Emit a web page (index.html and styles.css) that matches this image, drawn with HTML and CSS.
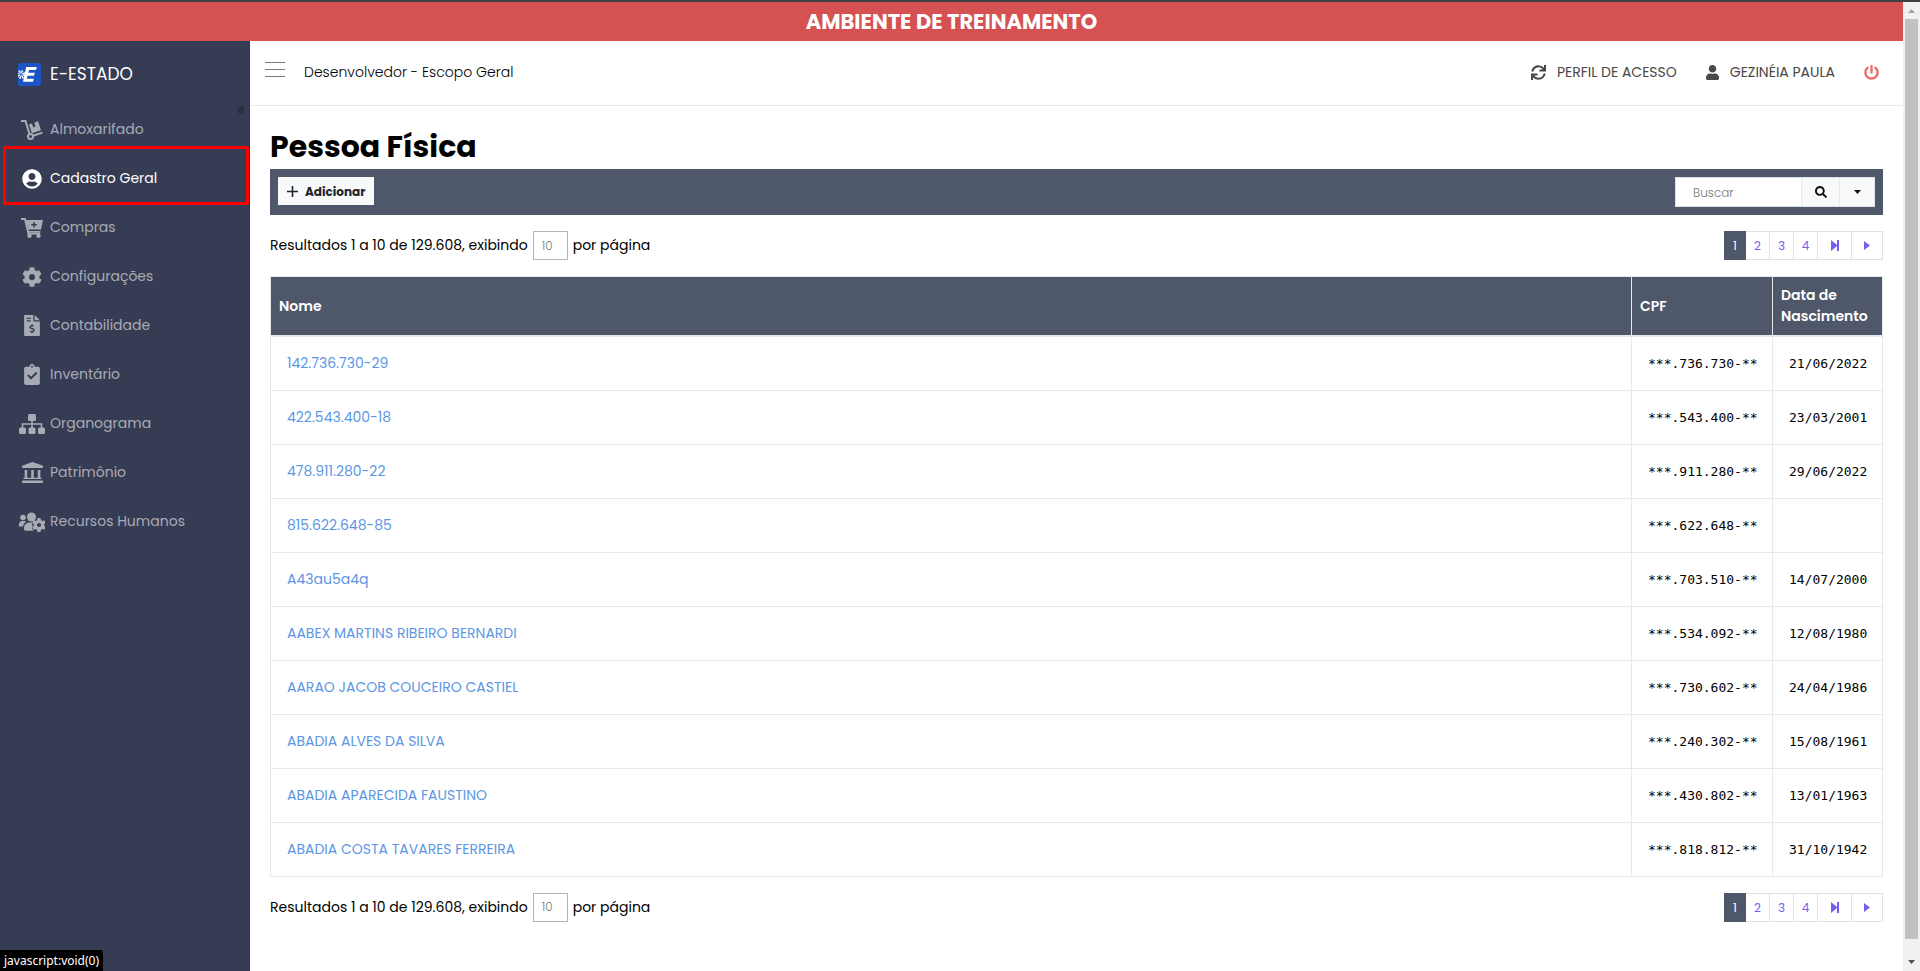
FILE: index.html
```html
<!DOCTYPE html>
<html lang="pt-BR">
<head>
<meta charset="utf-8">
<title>Pessoa Física - E-Estado</title>
<link rel="stylesheet" href="styles.css">
</head>
<body>
<svg class="sprite" aria-hidden="true">
  <symbol id="i-user-circle" viewBox="0 0 496 512"><path d="M248 8C111 8 0 119 0 256s111 248 248 248 248-111 248-248S385 8 248 8zm0 96c48.600 0 88 39.400 88 88s-39.400 88-88 88-88-39.400-88-88 39.400-88 88-88zm0 344c-58.700 0-111.300-26.600-146.500-68.200 18.800-35.400 55.600-59.800 98.500-59.800 2.400 0 4.800.4 7.100 1.100 13 4.200 26.600 6.900 40.900 6.900 14.300 0 28-2.700 40.900-6.900 2.300-.7 4.700-1.100 7.100-1.100 42.900 0 79.700 24.400 98.500 59.800C359.300 421.400 306.700 448 248 448z"/></symbol>
  <symbol id="i-cog" viewBox="0 0 512 512"><path d="M487.4 315.7l-42.6-24.6c4.3-23.2 4.3-47 0-70.2l42.6-24.6c4.9-2.800 7.100-8.600 5.500-14-11.100-35.600-30-67.800-54.700-94.600-3.800-4.100-10-5.100-14.800-2.300L380.800 110c-17.900-15.400-38.500-27.300-60.800-35.100V25.800c0-5.600-3.900-10.500-9.400-11.700-36.700-8.200-74.300-7.800-109.200 0-5.500 1.200-9.400 6.100-9.400 11.700V75c-22.200 7.900-42.800 19.800-60.800 35.100L88.700 85.500c-4.900-2.800-11-1.900-14.800 2.300-24.700 26.700-43.600 58.900-54.700 94.600-1.700 5.400.6 11.200 5.500 14L67.300 221c-4.300 23.200-4.300 47 0 70.200l-42.600 24.600c-4.900 2.800-7.100 8.600-5.500 14 11.100 35.600 30 67.800 54.700 94.600 3.800 4.100 10 5.100 14.800 2.300l42.600-24.600c17.900 15.400 38.500 27.300 60.800 35.100v49.200c0 5.600 3.900 10.500 9.400 11.700 36.700 8.200 74.300 7.800 109.200 0 5.500-1.200 9.400-6.100 9.400-11.700v-49.200c22.200-7.900 42.800-19.800 60.800-35.100l42.600 24.600c4.900 2.800 11 1.900 14.800-2.300 24.700-26.700 43.600-58.900 54.700-94.600 1.500-5.500-.7-11.300-5.600-14.100zM256 336c-44.100 0-80-35.900-80-80s35.900-80 80-80 80 35.900 80 80-35.900 80-80 80z"/></symbol>
  <symbol id="i-power" viewBox="0 0 512 512"><path d="M400 54.100c63 45 104 118.600 104 201.900 0 136.800-110.800 247.700-247.500 248C120 504.300 8.200 393 8 256.400 7.900 173.100 48.900 99.300 111.800 54.200c11.700-8.300 28-4.800 35 7.700L162.600 90c5.900 10.500 3.100 23.800-6.600 31-41.500 30.800-68 79.600-68 134.900-.1 92.300 74.500 168.100 168 168.100 91.600 0 168.600-74.200 168-169.100-.3-51.800-24.700-101.800-68.100-134-9.700-7.200-12.400-20.500-6.500-30.900l15.800-28.100c7-12.400 23.200-16.100 34.800-7.800zM296 264V24c0-13.300-10.700-24-24-24h-32c-13.300 0-24 10.700-24 24v240c0 13.300 10.700 24 24 24h32c13.300 0 24-10.700 24-24z"/></symbol>
  <symbol id="i-user" viewBox="0 0 448 512"><path d="M224 256c70.700 0 128-57.300 128-128S294.700 0 224 0 96 57.300 96 128s57.300 128 128 128zm89.600 32h-16.700c-22.200 10.200-46.900 16-72.900 16s-50.600-5.800-72.900-16h-16.700C60.200 288 0 348.200 0 422.400V464c0 26.500 21.500 48 48 48h352c26.500 0 48-21.500 48-48v-41.600c0-74.200-60.200-134.400-134.400-134.400z"/></symbol>
  <symbol id="i-sync" viewBox="0 0 512 512"><path d="M440.650 12.570l4 82.770A247.160 247.160 0 0 0 255.830 8C134.730 8 33.910 94.920 12.290 209.820A12 12 0 0 0 24.090 224h49.050a12 12 0 0 0 11.670-9.260 175.910 175.910 0 0 1 317-56.940l-101.460-4.860a12 12 0 0 0-12.570 12v47.410a12 12 0 0 0 12 12H500a12 12 0 0 0 12-12V12a12 12 0 0 0-12-12h-47.370a12 12 0 0 0-11.980 12.570zM255.830 432a175.610 175.610 0 0 1-146-77.800l101.800 4.870a12 12 0 0 0 12.570-12v-47.400a12 12 0 0 0-12-12H12a12 12 0 0 0-12 12V500a12 12 0 0 0 12 12h47.350a12 12 0 0 0 12-12.600l-4.150-82.570A247.170 247.170 0 0 0 255.830 504c121.110 0 221.930-86.920 243.550-201.820a12 12 0 0 0-11.800-14.180h-49.050a12 12 0 0 0-11.670 9.260A175.860 175.860 0 0 1 255.830 432z"/></symbol>
  <symbol id="i-search" viewBox="0 0 512 512"><path d="M505 442.700L405.300 343c-4.500-4.500-10.600-7-17-7H372c27.600-35.300 44-79.700 44-128C416 93.100 322.900 0 208 0S0 93.100 0 208s93.100 208 208 208c48.300 0 92.700-16.400 128-44v16.300c0 6.400 2.500 12.500 7 17l99.700 99.700c9.400 9.400 24.600 9.400 33.900 0l28.300-28.300c9.400-9.400 9.400-24.600.1-34zM208 336c-70.700 0-128-57.200-128-128 0-70.700 57.200-128 128-128 70.700 0 128 57.200 128 128 0 70.700-57.200 128-128 128z"/></symbol>
  <symbol id="i-dolly" viewBox="0 0 22 20"><path d="M0 1h4.500l4 13" fill="none" stroke="currentColor" stroke-width="2"/><circle cx="9.500" cy="16.500" r="2.500" fill="none" stroke="currentColor" stroke-width="2"/><path d="M12 15.800l9.500-3.200" stroke="currentColor" stroke-width="2"/><path d="M8 4.500l3-1 1.200 3.800 2.300-.8-1.200-3.700L17 1l3 9.300-9.200 3z"/></symbol>
  <symbol id="i-cart" viewBox="0 0 22 20"><path d="M0 1h4l3.500 14.500H19" fill="none" stroke="currentColor" stroke-width="2"/><path fill-rule="evenodd" d="M5 2h17l-2 9.500H7.500zm7.300 2v2h-2v1.500h2v2h1.500v-2h2V6h-2V4z"/><path d="M6.500 13h13v1.500h-13z"/><circle cx="8.500" cy="17.700" r="2.200"/><circle cx="17.500" cy="17.700" r="2.200"/></symbol>
  <symbol id="i-invoice" viewBox="0 0 384 512"><path fill-rule="evenodd" d="M24 0h200v136c0 13 11 24 24 24h136v328c0 13-11 24-24 24H24c-13 0-24-11-24-24V24C0 11 11 0 24 0zm40 64v32h96V64zm0 64v32h96v-32zm112 96v25c-30 3-48 22-48 47 0 30 20 42 52 51 34 10 42 13 42 25 0 11-10 17-28 17-15 0-29-6-41-14l-17 27c13 9 26 14 40 16v26h32v-26c31-4 49-23 49-49 0-29-18-41-52-51-35-9-42-13-42-24 0-9 9-16 25-16 13 0 24 4 35 11l17-27c-10-7-21-11-32-13v-25z"/><path d="M256 0l128 128H256z"/></symbol>
  <symbol id="i-clipboard" viewBox="0 0 384 512"><path fill-rule="evenodd" d="M48 64h80a64 64 0 0 1 128 0h80c26 0 48 22 48 48v352c0 26-22 48-48 48H48c-26 0-48-22-48-48V112c0-26 22-48 48-48zm144-24a24 24 0 1 0 0 48 24 24 0 0 0 0-48zM82 294l77 78c5 5 12 5 17 0l139-137c5-5 5-12 0-17l-19-19c-5-5-12-5-17 0L168 309l-48-49c-5-5-12-5-17 0l-21 17c-5 5-5 12 0 17z"/></symbol>
  <symbol id="i-sitemap" viewBox="0 0 26 20"><rect x="9" width="8" height="7" rx="1.500"/><rect y="13.500" width="7" height="6.500" rx="1.500"/><rect x="9.500" y="13.500" width="7" height="6.500" rx="1.500"/><rect x="19" y="13.500" width="7" height="6.500" rx="1.500"/><path d="M13 7v7M3.500 14V10h19v4" fill="none" stroke="currentColor" stroke-width="1.600"/></symbol>
  <symbol id="i-museum" viewBox="0 0 512 512"><path d="M256 0l240 88c10 4 16 10 16 20v20c0 9-7 16-16 16H16c-9 0-16-7-16-16v-20c0-10 6-16 16-20zM24 448h464c13 0 24 11 24 24v40H0v-40c0-13 11-24 24-24zM64 192h64v192h96V192h64v192h96V192h64v192h16c9 0 16 7 16 16v16H32v-16c0-9 7-16 16-16h16z"/></symbol>
  <symbol id="i-users-cog" viewBox="0 0 26 20"><circle cx="4" cy="5.500" r="2.800"/><circle cx="12.500" cy="5" r="4.500"/><path d="M0 14.500v-2.300C0 10.400 1.300 9 3 9h2.500c.7 0 1.300.2 1.800.6-1.800 1-3 2.700-3.200 4.900zM5 16.800c0-4.200 2.300-6.300 5.500-6.300h3.300l-1 2 1 1.500-1 2 1.700 2.800H7c-1.200 0-2-.8-2-2z"/><path fill-rule="evenodd" d="M18.500 6h3l.5 2.200 1.300.8 2-.7 1.400 2.500-1.500 1.400v1.600l1.500 1.400-1.400 2.500-2-.7-1.300.8-.5 2.200h-3l-.5-2.200-1.300-.8-2 .7-1.400-2.500 1.500-1.400v-1.600l-1.500-1.400L14.700 8.300l2 .7 1.300-.8zM20 10.900a2.100 2.100 0 1 0 0 4.200 2.100 2.100 0 0 0 0-4.200z"/></symbol>
</svg>

<div class="frame">
  <div class="page">
    <div class="banner">AMBIENTE DE TREINAMENTO</div>
    <div class="shell">
      <aside class="sidebar">
        <a class="brand" href="#">
          <svg class="brand-logo" viewBox="0 0 23 23"><rect width="23" height="23" rx="2" fill="#1c54c4"/><path d="M8.200 4h10.600L18 7h-7l-.7 2.800h6.500l-.8 3H9.500l-.7 3h7l-.8 3H5z" fill="#fff"/><circle cx="3" cy="11.500" r="2.600" fill="none" stroke="#fff" stroke-width="3.400" stroke-dasharray="1.200 .84"/></svg>
          <span>E-ESTADO</span>
        </a>
        <nav class="menu" aria-label="Módulos">
          <a class="item" href="#"><span class="item-icon"><svg width="22" height="20"><use href="#i-dolly"/></svg></span>Almoxarifado</a>
          <a class="item active" href="#"><span class="item-icon"><svg width="20" height="20"><use href="#i-user-circle"/></svg></span>Cadastro Geral</a>
          <a class="item" href="#"><span class="item-icon"><svg width="22" height="20"><use href="#i-cart"/></svg></span>Compras</a>
          <a class="item" href="#"><span class="item-icon"><svg width="20" height="20"><use href="#i-cog"/></svg></span>Configurações</a>
          <a class="item" href="#"><span class="item-icon"><svg width="16" height="21"><use href="#i-invoice"/></svg></span>Contabilidade</a>
          <a class="item" href="#"><span class="item-icon"><svg width="16" height="21"><use href="#i-clipboard"/></svg></span>Inventário</a>
          <a class="item" href="#"><span class="item-icon"><svg width="26" height="20"><use href="#i-sitemap"/></svg></span>Organograma</a>
          <a class="item" href="#"><span class="item-icon"><svg width="21" height="21"><use href="#i-museum"/></svg></span>Patrimônio</a>
          <a class="item" href="#"><span class="item-icon"><svg width="26" height="20"><use href="#i-users-cog"/></svg></span>Recursos Humanos</a>
        </nav>
        <span class="side-thumb"></span>
      </aside>
      <div class="main">
        <header class="topbar">
          <button class="burger" type="button" aria-label="Menu"><span></span><span></span><span></span></button>
          <span class="scope">Desenvolvedor - Escopo Geral</span>
          <a class="top-link" href="#"><svg width="15" height="15"><use href="#i-sync"/></svg>PERFIL DE ACESSO</a>
          <a class="top-link" href="#"><svg width="13" height="15"><use href="#i-user"/></svg>GEZINÉIA PAULA</a>
          <a class="top-link power" href="#" aria-label="Sair"><svg width="15" height="15"><use href="#i-power"/></svg></a>
        </header>
        <main class="content">
          <h1>Pessoa Física</h1>
          <div class="toolbar">
            <button class="add" type="button"><svg width="11" height="11" viewBox="0 0 11 11"><path d="M5.500 0v11M0 5.500h11" stroke="currentColor" stroke-width="1.600"/></svg>Adicionar</button>
            <form class="search">
              <input type="text" placeholder="Buscar" aria-label="Buscar">
              <button class="go" type="button" aria-label="Pesquisar"><svg width="12" height="12"><use href="#i-search"/></svg></button>
              <button class="more" type="button" aria-label="Mais opções"><svg width="7" height="4" viewBox="0 0 7 4"><path d="M0 0h7L3.500 4z"/></svg></button>
            </form>
          </div>
          <div class="results">
            <label class="per-page">Resultados 1 a 10 de 129.608, exibindo <input type="text" value="10"> por página</label>
            <nav class="pager" aria-label="Páginas"><a class="on" href="#">1</a><a href="#">2</a><a href="#">3</a><a href="#">4</a><a class="last" href="#" aria-label="Última"><svg width="8" height="11" viewBox="0 0 8 11"><path d="M0 0l6 5V0h2v11H6V6l-6 5z"/></svg></a><a class="next" href="#" aria-label="Próxima"><svg width="6" height="9" viewBox="0 0 6 9"><path d="M0 0l6 4.500L0 9z"/></svg></a></nav>
          </div>
          <table>
            <thead><tr><th>Nome</th><th class="cpf">CPF</th><th class="date">Data de Nascimento</th></tr></thead>
            <tbody>
              <tr><td><a href="#">142.736.730-29</a></td><td class="mono">***.736.730-**</td><td class="mono">21/06/2022</td></tr>
              <tr><td><a href="#">422.543.400-18</a></td><td class="mono">***.543.400-**</td><td class="mono">23/03/2001</td></tr>
              <tr><td><a href="#">478.911.280-22</a></td><td class="mono">***.911.280-**</td><td class="mono">29/06/2022</td></tr>
              <tr><td><a href="#">815.622.648-85</a></td><td class="mono">***.622.648-**</td><td class="mono"></td></tr>
              <tr><td><a href="#">A43au5a4q</a></td><td class="mono">***.703.510-**</td><td class="mono">14/07/2000</td></tr>
              <tr><td><a href="#">AABEX MARTINS RIBEIRO BERNARDI</a></td><td class="mono">***.534.092-**</td><td class="mono">12/08/1980</td></tr>
              <tr><td><a href="#">AARAO JACOB COUCEIRO CASTIEL</a></td><td class="mono">***.730.602-**</td><td class="mono">24/04/1986</td></tr>
              <tr><td><a href="#">ABADIA ALVES DA SILVA</a></td><td class="mono">***.240.302-**</td><td class="mono">15/08/1961</td></tr>
              <tr><td><a href="#">ABADIA APARECIDA FAUSTINO</a></td><td class="mono">***.430.802-**</td><td class="mono">13/01/1963</td></tr>
              <tr><td><a href="#">ABADIA COSTA TAVARES FERREIRA</a></td><td class="mono">***.818.812-**</td><td class="mono">31/10/1942</td></tr>
            </tbody>
          </table>
          <div class="results">
            <label class="per-page">Resultados 1 a 10 de 129.608, exibindo <input type="text" value="10"> por página</label>
            <nav class="pager" aria-label="Páginas, rodapé"><a class="on" href="#">1</a><a href="#">2</a><a href="#">3</a><a href="#">4</a><a class="last" href="#" aria-label="Última"><svg width="8" height="11" viewBox="0 0 8 11"><path d="M0 0l6 5V0h2v11H6V6l-6 5z"/></svg></a><a class="next" href="#" aria-label="Próxima"><svg width="6" height="9" viewBox="0 0 6 9"><path d="M0 0l6 4.500L0 9z"/></svg></a></nav>
          </div>
        </main>
      </div>
    </div>
  </div>
  <div class="scrollbar">
    <svg width="7" height="4" viewBox="0 0 7 4"><path d="M3.500 0L7 4H0z" fill="#a3a3a3"/></svg>
    <span class="thumb"></span>
    <svg width="7" height="4" viewBox="0 0 7 4"><path d="M0 0h7L3.500 4z" fill="#505050"/></svg>
  </div>
</div>
<div class="status">javascript:void(0)</div>
</body>
</html>
```
FILE: styles.css
```css
* { box-sizing: border-box; }
body {
  margin: 0;
  background: #fff;
  color: #000;
  font: 400 14px/21px Poppins, Inter, "Open Sans", sans-serif;
}
a { color: inherit; text-decoration: none; }
button, input { font: inherit; color: inherit; border-radius: 0; margin: 0; }
svg { fill: currentColor; flex: none; }
.sprite { position: absolute; width: 0; height: 0; }

.frame { display: flex; height: 100vh; overflow: hidden; border-top: 2px solid #414141; }
.page { flex: 1; display: flex; flex-direction: column; min-width: 0; }
.banner {
  background: #d65151;
  color: #fff;
  font-size: 21px;
  font-weight: 700;
  line-height: 39px;
  text-align: center;
}
.shell { flex: 1; display: flex; min-height: 0; }

.sidebar { position: relative; width: 250px; background: #363c54; border-right: 1px solid #2f354b; }
.brand { display: flex; align-items: center; gap: 9px; height: 64px; padding: 2px 0 0 18px; color: #fff; font-size: 17px; }
.brand-logo { width: 23px; height: 23px; }
.item { display: flex; align-items: center; height: 49px; padding-left: 18px; color: #a9abb4; }
.item-icon { display: flex; justify-content: center; width: 28px; margin-right: 4px; }
.item.active { position: relative; color: #fff; }
.item.active::after { content: ""; position: absolute; inset: -8px 0 -2px 3px; border: 3px solid #f00; border-radius: 2px; }
.side-thumb { position: absolute; top: 65px; right: 5px; width: 6px; height: 8px; border-radius: 2px; background: #2b3143; }

.main { flex: 1; display: flex; flex-direction: column; min-width: 0; }
.topbar { display: flex; align-items: center; height: 65px; padding: 0 24px 1px 15px; border-bottom: 1px solid #e9e9ec; }
.burger { display: flex; flex-direction: column; gap: 6px; width: 20px; padding: 0; margin-bottom: 6px; border: 0; background: none; }
.burger span { height: 1px; background: #777; }
.scope { margin: 0 auto 0 19px; font-weight: 300; }
.top-link { display: flex; align-items: center; gap: 11px; margin-left: 29px; color: #484848; }
.top-link.power { color: #ee6a6e; }

.content { padding: 18px 20px; }
h1 { margin: 0; font-size: 30px; font-weight: 700; line-height: 45px; }
.toolbar { display: flex; justify-content: space-between; align-items: flex-start; height: 46px; padding: 8px; background: #4f576a; }
.add { display: flex; align-items: center; gap: 7px; height: 28px; padding: 0 9px; border: 0; background: #f8f9fb; color: #212529; font-size: 12px; font-weight: 700; }
.search { display: flex; width: 200px; height: 30px; border: 1px solid #dee1e6; background: #f8f9fb; font-size: 12px; }
.search input { flex: 1; min-width: 0; padding: 0 17px; border: 0; background: #fff; font-weight: 300; }
.search input::placeholder { color: #777; opacity: 1; }
.search button { display: grid; place-items: center; padding: 0; border: 0; border-left: 1px solid #e5e8ec; background: none; color: #111; }
.go { width: 38px; }
.more { width: 35px; }

.results { display: flex; justify-content: space-between; align-items: center; height: 29px; margin: 16px 0; }
.per-page { display: flex; align-items: center; gap: 5px; }
.per-page input { width: 35px; height: 29px; padding: 0 8px; border: 1px solid #b5b5b5; background: #fff; color: #777; font-size: 12px; font-weight: 300; }
.pager { display: flex; height: 29px; border: 1px solid #dee2e6; color: #7460ee; font-size: 12px; }
.pager a { display: grid; place-items: center; width: 24px; border-right: 1px solid #dee2e6; }
.pager a.on { width: 22px; margin: -1px 0 -1px -1px; background: #4f576a; border: 0; color: #fff; }
.pager a.last { width: 34px; }
.pager a.next { width: 30px; border: 0; }

table { width: 100%; border-collapse: collapse; table-layout: fixed; }
th, td { border: 1px solid #e5e8ec; text-align: left; }
th { height: 59px; padding: 8px; background: #4f576a; border-bottom-width: 2px; color: #fff; font-weight: 600; }
td { height: 54px; padding: 0 16px; }
td a { color: #5d96e4; }
.cpf { width: 141px; }
.date { width: 110px; }
.mono { font: 400 13px/21px "DejaVu Sans Mono", monospace; white-space: nowrap; }

.scrollbar { display: flex; flex-direction: column; align-items: center; width: 17px; padding: 7px 0; gap: 6px; background: #f1f1f1; }
.thumb { flex: 1; width: 13px; margin-bottom: 15px; background: #c1c1c1; }
.status { position: fixed; left: 0; bottom: 0; padding: 0 4px; background: #000; color: #fff; border-top-right-radius: 3px; font: 12px/21px "Noto Sans", sans-serif; }
```
